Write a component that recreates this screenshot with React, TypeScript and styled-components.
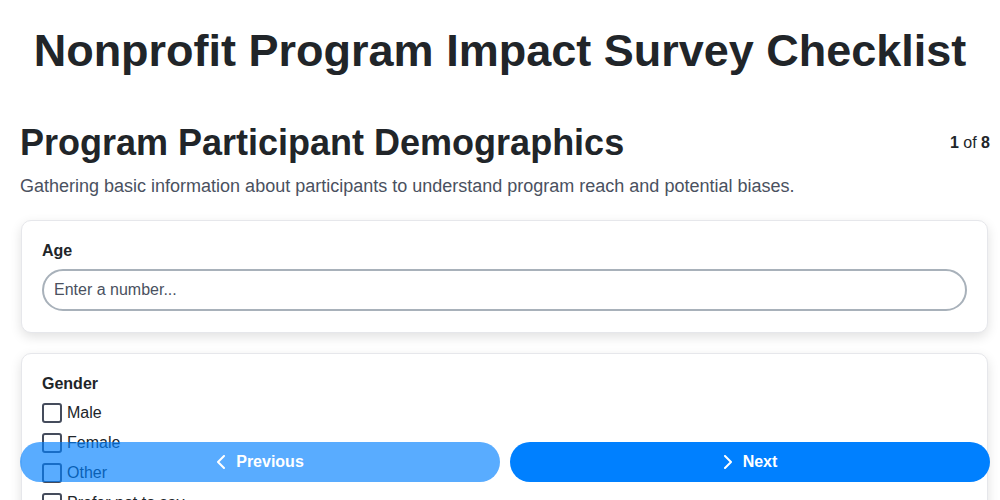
import styled, { createGlobalStyle } from 'styled-components'

const GlobalStyle = createGlobalStyle`
  html, body {
    margin: 0;
    padding: 0;
    overflow: hidden;
    background: #ffffff;
    font-family: "Liberation Sans", Arial, sans-serif;
    color: #212529;
  }
  * { box-sizing: border-box; }
`;

const Page = styled.div`
  padding: 0 0 80px 0;
`;

const MainTitle = styled.h1`
  margin: 0;
  padding-top: 25px;
  text-align: center;
  white-space: nowrap;
  font-size: 45px;
  font-weight: 700;
  line-height: 52px;
  color: #212529;
`;

const Content = styled.div`
  padding: 0 10px 0 20px;
`;

const SectionHeader = styled.div`
  display: flex;
  justify-content: space-between;
  align-items: center;
  margin-top: 45px;
`;

const SectionTitle = styled.h2`
  margin: 0;
  font-size: 36px;
  font-weight: 700;
  line-height: 42px;
`;

const Progress = styled.div`
  font-size: 16px;
  color: #212529;
  b { font-weight: 700; }
`;

const Description = styled.p`
  margin: 11px 0 23px;
  font-size: 18px;
  line-height: 22px;
  color: #4a5160;
`;

const Card = styled.div`
  margin: 0 2px 20px 1px;
  padding: 20px 20px 21px;
  border: 1px solid #e6e7eb;
  border-radius: 10px;
  background: #fff;
  box-shadow: 0 4px 12px rgba(0, 0, 0, 0.12);
`;

const Label = styled.div`
  font-size: 16px;
  font-weight: 700;
  line-height: 19px;
  margin-bottom: 9px;
`;

const TextInput = styled.input`
  display: block;
  width: 100%;
  height: 42px;
  padding: 0 10px;
  border: 2px solid #a8b1ba;
  border-radius: 21px;
  font-family: inherit;
  font-size: 16px;
  color: #212529;
  outline: none;
  &::placeholder { color: #4a5160; }
`;

const Options = styled.div`
  display: flex;
  flex-direction: column;
  gap: 10px;
  padding-top: 1px;
`;

const Option = styled.label`
  display: flex;
  align-items: center;
  gap: 5px;
  font-size: 16px;
  line-height: 20px;
  color: #212529;
`;

const Box = styled.span`
  width: 20px;
  height: 20px;
  border: 2px solid #454c5c;
  border-radius: 3px;
  background: #fff;
`;

const Footer = styled.div`
  position: fixed;
  left: 20px;
  right: 10px;
  bottom: 18px;
  display: flex;
  gap: 10px;
`;

const NavButton = styled.button<{ $faded?: boolean }>`
  flex: 1;
  height: 40px;
  display: flex;
  align-items: center;
  justify-content: center;
  gap: 10px;
  border: none;
  border-radius: 20px;
  background: #0080ff;
  color: #fff;
  font-family: inherit;
  font-size: 16px;
  font-weight: 700;
  opacity: ${p => (p.$faded ? 0.65 : 1)};
`;

const Chevron = ({ dir }: { dir: 'left' | 'right' }) => (
  <svg width="10" height="14" viewBox="0 0 10 14" fill="none">
    <path
      d={dir === 'left' ? 'M8 1 L2 7 L8 13' : 'M2 1 L8 7 L2 13'}
      stroke="currentColor"
      strokeWidth="2"
      strokeLinecap="round"
      strokeLinejoin="round"
    />
  </svg>
);

const genders = ['Male', 'Female', 'Other', 'Prefer not to say'];

const App = () => {
  return (
    <>
      <GlobalStyle />
      <Page>
        <MainTitle>Nonprofit Program Impact Survey Checklist</MainTitle>
        <Content>
          <SectionHeader>
            <SectionTitle>Program Participant Demographics</SectionTitle>
            <Progress><b>1</b> of <b>8</b></Progress>
          </SectionHeader>
          <Description>
            Gathering basic information about participants to understand program reach and potential biases.
          </Description>
          <Card>
            <Label>Age</Label>
            <TextInput type="text" placeholder="Enter a number..." />
          </Card>
          <Card>
            <Label>Gender</Label>
            <Options>
              {genders.map(g => (
                <Option key={g}>
                  <Box />
                  {g}
                </Option>
              ))}
            </Options>
          </Card>
        </Content>
      </Page>
      <Footer>
        <NavButton $faded>
          <Chevron dir="left" />
          Previous
        </NavButton>
        <NavButton>
          <Chevron dir="right" />
          Next
        </NavButton>
      </Footer>
    </>
  )
}

export default App
